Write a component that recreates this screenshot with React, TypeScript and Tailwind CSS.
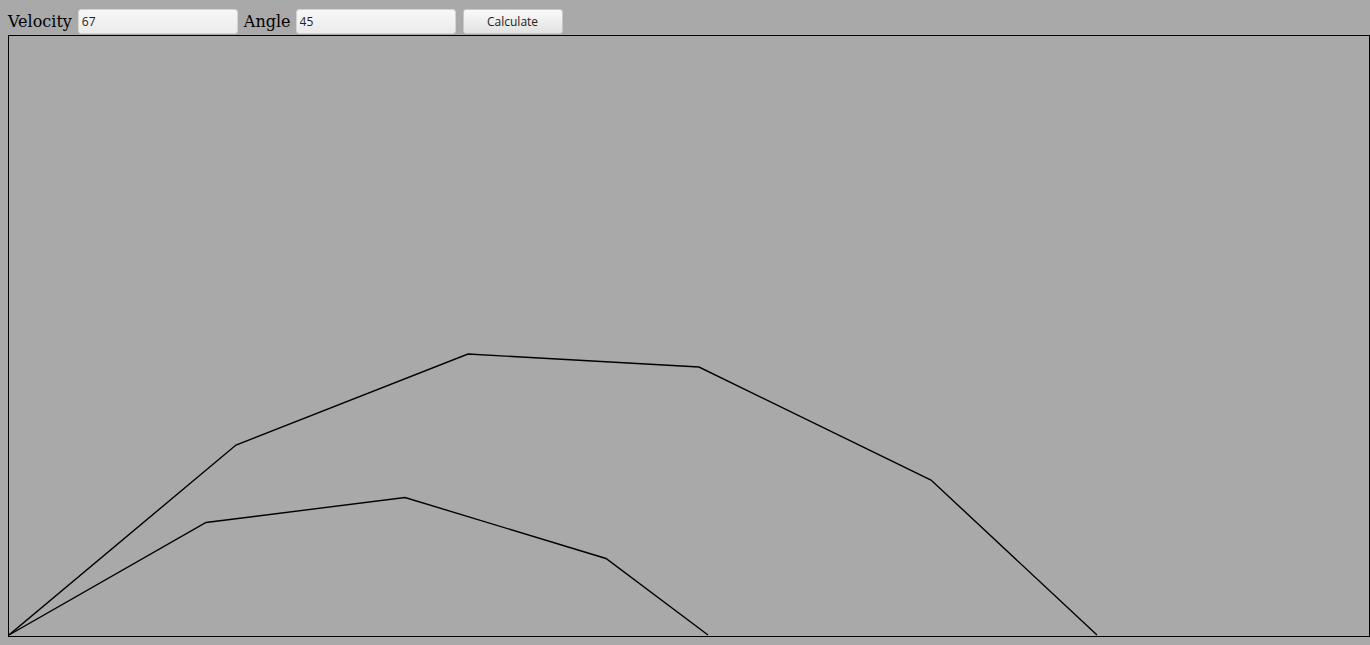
const high = [
  [0, 599],
  [227, 409],
  [459, 318],
  [690, 331],
  [922, 444],
  [1088, 599],
];

const low = [
  [0, 599],
  [197, 486.5],
  [396, 461.5],
  [597, 522.5],
  [699, 599],
];

const toPoints = (pts: number[][]) => pts.map((p) => p.join(",")).join(" ");

export default function App() {
  return (
    <div className="min-h-[645px] w-full bg-[#a9a9a9] pt-[9px]">
      <div className="flex h-[25px] items-center pl-2">
        <span className="mr-[6px] font-['DejaVu_Serif',serif] text-[16px] text-black">
          Velocity
        </span>
        <input
          defaultValue="67"
          className="h-[25px] w-[160px] rounded-[3px] border border-[#d4d4d4] bg-gradient-to-b from-[#f7f7f7] to-[#ebebeb] px-[3px] font-['Open_Sans',sans-serif] text-[12px] text-[#222] outline-none"
        />
        <span className="ml-[6px] mr-[5px] font-['DejaVu_Serif',serif] text-[16px] text-black">
          Angle
        </span>
        <input
          defaultValue="45"
          className="h-[25px] w-[160px] rounded-[3px] border border-[#d4d4d4] bg-gradient-to-b from-[#f7f7f7] to-[#ebebeb] px-[3px] font-['Open_Sans',sans-serif] text-[12px] text-[#222] outline-none"
        />
        <button className="ml-[7px] h-[25px] w-[100px] rounded-[3px] border border-[#c8c8c8] bg-gradient-to-b from-[#fafafa] to-[#e2e2e2] font-['Open_Sans',sans-serif] text-[12px] text-[#222]">
          Calculate
        </button>
      </div>
      <div className="ml-2 mt-px h-[602px] w-[1362px] border border-black">
        <svg width="1360" height="600" viewBox="0 0 1360 600" className="block">
          <polyline points={toPoints(high)} fill="none" stroke="#000" strokeWidth="1.4" />
          <polyline points={toPoints(low)} fill="none" stroke="#000" strokeWidth="1.4" />
        </svg>
      </div>
    </div>
  );
}
